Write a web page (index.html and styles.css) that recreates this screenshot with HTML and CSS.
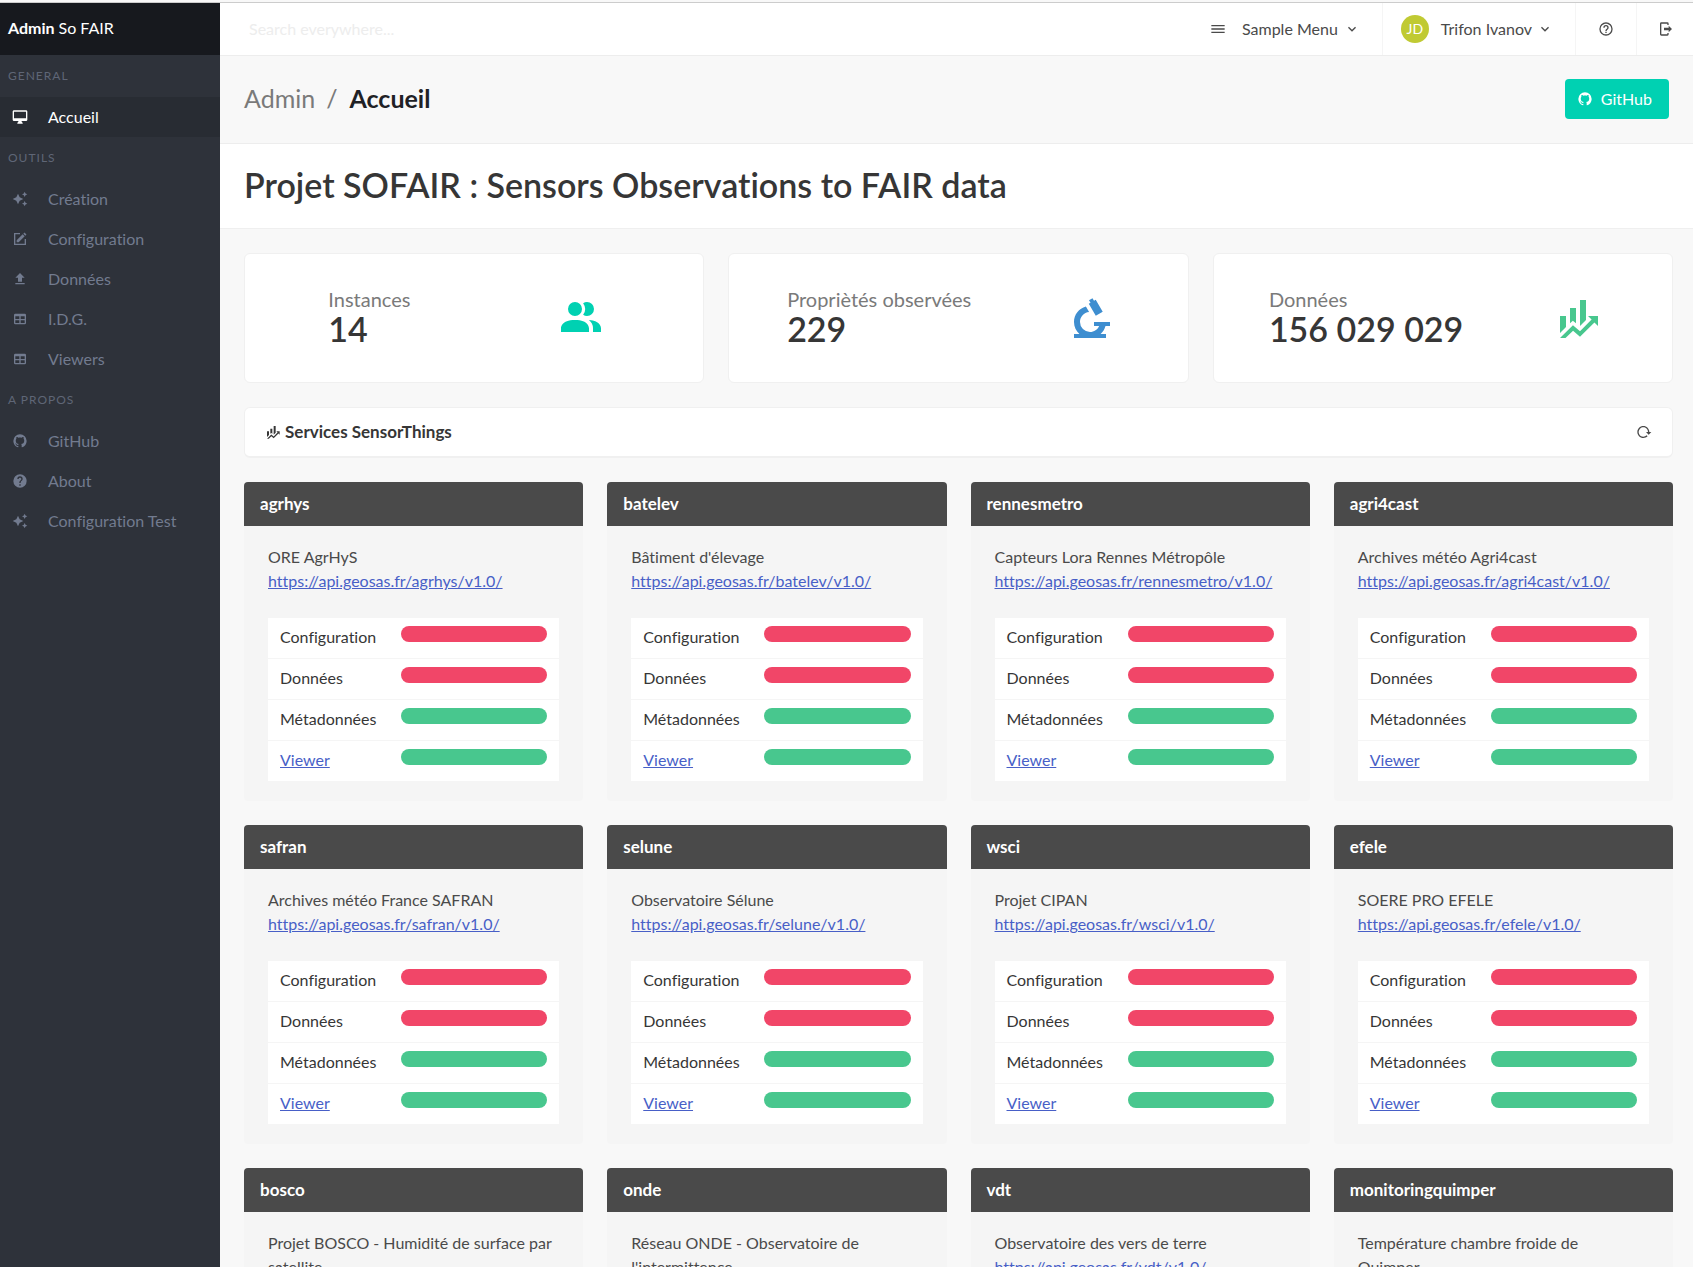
FILE: index.html
```
<!DOCTYPE html>
<html lang="fr">
<head>
<meta charset="utf-8">
<meta name="viewport" content="width=device-width, initial-scale=1">
<title>Admin So FAIR</title>
<link rel="stylesheet" href="styles.css">
</head>
<body>
<svg class="sprite" aria-hidden="true">
  <symbol id="i-desktop" viewBox="0 0 24 24"><path d="M21,14H3V4H21M21,2H3C1.89,2 1,2.89 1,4V16A2,2 0 0,0 3,18H10L8,21V22H16V21L14,18H21A2,2 0 0,0 23,16V4C23,2.89 22.1,2 21,2Z"/></symbol>
  <symbol id="i-creation" viewBox="0 0 24 24"><path d="M19,1L17.74,3.75L15,5L17.74,6.26L19,9L20.25,6.26L23,5L20.25,3.75M9,4L6.5,9.5L1,12L6.5,14.5L9,20L11.5,14.5L17,12L11.5,9.5M19,15L17.74,17.74L15,19L17.74,20.25L19,23L20.25,20.25L23,19L20.25,17.74"/></symbol>
  <symbol id="i-edit" viewBox="0 0 24 24"><path d="M21,12V21H3V3H12V5H5V19H19V12H21M18.7,2.3L21.7,5.3L20,7L17,4L18.7,2.3M7,14L16,5L19,8L10,17H7V14Z"/></symbol>
  <symbol id="i-upload" viewBox="0 0 24 24"><path d="M9,16V10H5L12,3L19,10H15V16H9M5,20V18H19V20H5Z"/></symbol>
  <symbol id="i-table" viewBox="0 0 24 24"><path d="M5,4H19A2,2 0 0,1 21,6V18A2,2 0 0,1 19,20H5A2,2 0 0,1 3,18V6A2,2 0 0,1 5,4M5,8V12H11V8H5M13,8V12H19V8H13M5,14V18H11V14H5M13,14V18H19V14H13Z"/></symbol>
  <symbol id="i-github" viewBox="0 0 24 24"><path d="M12,2A10,10 0 0,0 2,12C2,16.42 4.87,20.17 8.84,21.5C9.34,21.58 9.5,21.27 9.5,21C9.5,20.77 9.5,20.14 9.5,19.31C6.73,19.91 6.14,17.97 6.14,17.97C5.68,16.81 5.03,16.5 5.03,16.5C4.12,15.88 5.1,15.9 5.1,15.9C6.1,15.97 6.63,16.93 6.63,16.93C7.5,18.45 8.97,18 9.54,17.76C9.63,17.11 9.89,16.67 10.17,16.42C7.95,16.17 5.62,15.31 5.62,11.5C5.62,10.39 6,9.5 6.65,8.79C6.55,8.54 6.2,7.5 6.75,6.15C6.75,6.15 7.59,5.88 9.5,7.17C10.29,6.95 11.15,6.84 12,6.84C12.85,6.84 13.71,6.95 14.5,7.17C16.41,5.88 17.25,6.15 17.25,6.15C17.8,7.5 17.45,8.54 17.35,8.79C18,9.5 18.38,10.39 18.38,11.5C18.38,15.32 16.04,16.16 13.81,16.41C14.17,16.72 14.5,17.33 14.5,18.26C14.5,19.6 14.5,20.68 14.5,21C14.5,21.27 14.66,21.59 15.17,21.5C19.14,20.16 22,16.42 22,12A10,10 0 0,0 12,2Z"/></symbol>
  <symbol id="i-help" viewBox="0 0 24 24"><path d="M15.07,11.25L14.17,12.17C13.45,12.89 13,13.5 13,15H11V14.5C11,13.39 11.45,12.39 12.17,11.67L13.41,10.41C13.78,10.05 14,9.55 14,9C14,7.89 13.1,7 12,7A2,2 0 0,0 10,9H8A4,4 0 0,1 12,5A4,4 0 0,1 16,9C16,9.88 15.64,10.67 15.07,11.25M13,19H11V17H13M12,2A10,10 0 0,0 2,12A10,10 0 0,0 12,22A10,10 0 0,0 22,12C22,6.47 17.5,2 12,2Z"/></symbol>
  <symbol id="i-help-outline" viewBox="0 0 24 24"><path d="M11,18H13V16H11V18M12,2A10,10 0 0,0 2,12A10,10 0 0,0 12,22A10,10 0 0,0 22,12A10,10 0 0,0 12,2M12,20C7.59,20 4,16.41 4,12C4,7.59 7.59,4 12,4C16.41,4 20,7.59 20,12C20,16.41 16.41,20 12,20M12,6A4,4 0 0,0 8,10H10A2,2 0 0,1 12,8A2,2 0 0,1 14,10C14,12 11,11.75 11,15H13C13,12.75 16,12.5 16,10A4,4 0 0,0 12,6Z"/></symbol>
  <symbol id="i-menu" viewBox="0 0 24 24"><path d="M2,6H22V8H2V6M2,11H22V13H2V11M2,16H22V18H2V16Z"/></symbol>
  <symbol id="i-chevron" viewBox="0 0 24 24"><path d="M7.41,8.58L12,13.17L16.59,8.58L18,10L12,16L6,10L7.41,8.58Z"/></symbol>
  <symbol id="i-logout" viewBox="0 0 24 24"><path d="M16,17V14H9V10H16V7L21,12L16,17M14,2A2,2 0 0,1 16,4V6H14V4H5V20H14V18H16V20A2,2 0 0,1 14,22H5A2,2 0 0,1 3,20V4A2,2 0 0,1 5,2H14Z"/></symbol>
  <symbol id="i-people" viewBox="0 0 24 24"><path d="M16 17V19H2V17S2 13 9 13 16 17 16 17M12.5 7.5A3.5 3.5 0 1 0 9 11A3.5 3.5 0 0 0 12.5 7.5M15.94 13A5.32 5.32 0 0 1 18 17V19H22V17S22 13.37 15.94 13M15 4A3.39 3.39 0 0 0 13.07 4.59A5 5 0 0 1 13.07 10.41A3.39 3.39 0 0 0 15 11A3.5 3.5 0 0 0 15 4Z"/></symbol>
  <symbol id="i-microscope" viewBox="0 0 24 24"><path d="M9.46,6.28L11.05,9C8.47,9.26 6.5,11.41 6.5,14A5,5 0 0,0 11.5,19C13.55,19 15.31,17.77 16.08,16H13.5V14H21.5V16H19.25C18.84,17.57 17.97,18.96 16.79,20H19.5V22H3.5V20H6.21C4.55,18.53 3.5,16.39 3.5,14C3.5,10.37 5.96,7.2 9.46,6.28M12.74,2.07L13.5,3.37L14.36,2.87L17.86,8.93L14.39,10.93L10.89,4.87L11.76,4.37L11,3.07L12.74,2.07Z"/></symbol>
  <symbol id="i-finance" viewBox="0 0 24 24"><path d="M6,16.5L3,19.44V11H6M11,14.66L9.43,13.32L8,14.64V7H11M16,13L13,16V3H16M18.81,12.81L17,11H22V16L20.21,14.21L13,21.36L9.53,18.34L5.75,22H3L9.47,15.66L13,18.64"/></symbol>
  <symbol id="i-reload" viewBox="0 0 24 24"><path d="M2 12C2 16.97 6.03 21 11 21C13.39 21 15.68 20.06 17.4 18.4L15.9 16.9C14.63 18.25 12.86 19 11 19C4.76 19 1.64 11.46 6.05 7.05C10.46 2.64 18 5.77 18 12H15L19 16H19.1L23 12H20C20 7.03 15.97 3 11 3C6.03 3 2 7.03 2 12Z"/></symbol>
</svg>

<div class="app">
  <aside class="sidebar">
    <div class="brand"><b>Admin</b> So FAIR</div>
    <nav>
      <p class="menu-label">General</p>
      <ul class="menu">
        <li><a href="#" class="active"><svg class="icon"><use href="#i-desktop"/></svg>Accueil</a></li>
      </ul>
      <p class="menu-label">Outils</p>
      <ul class="menu">
        <li><a href="#"><svg class="icon"><use href="#i-creation"/></svg>Création</a></li>
        <li><a href="#"><svg class="icon"><use href="#i-edit"/></svg>Configuration</a></li>
        <li><a href="#"><svg class="icon"><use href="#i-upload"/></svg>Données</a></li>
        <li><a href="#"><svg class="icon"><use href="#i-table"/></svg>I.D.G.</a></li>
        <li><a href="#"><svg class="icon"><use href="#i-table"/></svg>Viewers</a></li>
      </ul>
      <p class="menu-label">A propos</p>
      <ul class="menu">
        <li><a href="#"><svg class="icon"><use href="#i-github"/></svg>GitHub</a></li>
        <li><a href="#"><svg class="icon"><use href="#i-help"/></svg>About</a></li>
        <li><a href="#"><svg class="icon"><use href="#i-creation"/></svg>Configuration Test</a></li>
      </ul>
    </nav>
  </aside>

  <div class="content">
    <header class="navbar">
      <input class="search" type="search" placeholder="Search everywhere..." aria-label="Search everywhere">
      <button class="nav-item nav-menu" type="button"><svg class="icon"><use href="#i-menu"/></svg><span>Sample Menu</span><svg class="icon"><use href="#i-chevron"/></svg></button>
      <button class="nav-item nav-user" type="button"><span class="avatar">JD</span><span>Trifon Ivanov</span><svg class="icon"><use href="#i-chevron"/></svg></button>
      <a class="nav-item nav-icon" href="#" aria-label="Help"><svg class="icon"><use href="#i-help-outline"/></svg></a>
      <a class="nav-item nav-icon" href="#" aria-label="Log out"><svg class="icon"><use href="#i-logout"/></svg></a>
    </header>

    <section class="title-bar">
      <ul class="crumbs">
        <li>Admin</li>
        <li>Accueil</li>
      </ul>
      <a class="button" href="#"><svg class="icon"><use href="#i-github"/></svg>GitHub</a>
    </section>

    <section class="hero">
      <h1>Projet SOFAIR : Sensors Observations to FAIR data</h1>
    </section>

    <main class="main">
      <div class="stats">
        <div class="stat"><div class="stat-text"><h2>Instances</h2><p>14</p></div><svg class="stat-icon teal"><use href="#i-people"/></svg></div>
        <div class="stat"><div class="stat-text"><h2>Propriètés observées</h2><p>229</p></div><svg class="stat-icon blue"><use href="#i-microscope"/></svg></div>
        <div class="stat"><div class="stat-text"><h2>Données</h2><p>156 029 029</p></div><svg class="stat-icon green"><use href="#i-finance"/></svg></div>
      </div>

      <div class="panel">
        <h2><svg class="icon"><use href="#i-finance"/></svg>Services SensorThings</h2>
        <button type="button" aria-label="Reload"><svg class="icon"><use href="#i-reload"/></svg></button>
      </div>

      <div class="services" id="services"></div>
    </main>
  </div>
</div>
<script src="services.js"></script>
</body>
</html>
```
FILE: styles.css
```
* {
  box-sizing: border-box;
}

html {
  padding-top: 2px;
  background: #f8f8f8;
}

body {
  margin: 0;
  border-top: 1px solid #ccc;
  background: #f8f8f8;
  color: #4a4a4a;
  font: 16px/24px Lato, "Open Sans", sans-serif;
  font-variant-ligatures: none;
}

h1, h2, p, ul {
  margin: 0;
  padding: 0;
  font-weight: inherit;
}

ul {
  list-style: none;
}

button, input {
  font: inherit;
  color: inherit;
  background: none;
  border: 0;
  padding: 0;
}

.sprite {
  display: none;
}

.icon {
  flex: none;
  width: 16px;
  height: 16px;
  fill: currentColor;
}

.app {
  display: flex;
  min-height: calc(100vh - 3px);
}

/* Sidebar */
.sidebar {
  flex: none;
  width: 220px;
  background: #2e323a;
}

.brand {
  display: flex;
  align-items: center;
  gap: 4px;
  height: 52px;
  padding: 0 8px 2px;
  background: #17191e;
  color: #fff;
}

.menu-label {
  padding: 12px 8px;
  color: #5f6676;
  font-size: 12px;
  line-height: 18px;
  letter-spacing: 1px;
  text-transform: uppercase;
}

.menu a {
  display: flex;
  align-items: center;
  gap: 20px;
  height: 40px;
  padding-left: 12px;
  color: #727b8f;
  text-decoration: none;
}

.menu a.active {
  background: #282c33;
  color: #fff;
}

/* Top bar */
.content {
  flex: 1;
  min-width: 0;
}

.navbar {
  display: flex;
  height: 53px;
  background: #fff;
  border-bottom: 1px solid #ededed;
}

.search {
  flex: 1;
  min-width: 0;
  padding-left: 29px;
}

.search::placeholder {
  color: #ededed;
}

.nav-item {
  display: flex;
  align-items: center;
  border-left: 1px solid #f5f5f5;
  color: #4a4a4a;
}

.nav-menu {
  gap: 16px;
  padding: 0 22px 0 12px;
  border-left: 0;
}

.nav-menu span {
  margin-right: -10px;
}

.nav-user {
  gap: 12px;
  padding: 0 22px 0 18px;
}

.nav-user .icon {
  margin-left: -7px;
}

.avatar {
  width: 28px;
  height: 28px;
  border-radius: 50%;
  background: #c0ca33;
  color: #fff;
  font-size: 14px;
  line-height: 28px;
  text-align: center;
}

.nav-icon {
  justify-content: center;
  width: 61px;
}

.nav-icon:last-child {
  width: 57px;
  padding-left: 2px;
}

/* Title and hero */
.title-bar {
  display: flex;
  align-items: center;
  justify-content: space-between;
  padding: 23px 24px 24px;
  border-bottom: 1px solid #ededed;
}

.crumbs {
  display: flex;
  padding-bottom: 2px;
  color: #7a7a7a;
  font-size: 25px;
}

.crumbs li + li {
  color: #202125;
  font-weight: 700;
}

.crumbs li + li::before {
  content: "/";
  padding: 0 12px 0 11px;
  color: #7a7a7a;
  font-weight: 400;
}

.button {
  display: flex;
  align-items: center;
  gap: 8px;
  height: 40px;
  padding: 0 17px 0 12px;
  border-radius: 4px;
  background: #00d1b2;
  color: #fff;
  text-decoration: none;
}

.hero {
  padding: 21px 24px 23px;
  background: #fff;
  border-bottom: 1px solid #efefef;
}

.hero h1 {
  color: #363636;
  font-size: 34px;
  font-weight: 600;
  line-height: 40px;
}

/* Main area */
.main {
  padding: 24px 20px 24px 24px;
}

.stats {
  display: grid;
  grid-template-columns: repeat(3, 1fr);
  gap: 24px;
}

.stat {
  display: flex;
  align-items: center;
  justify-content: space-around;
  height: 130px;
  padding: 0 23px 0 24px;
  background: #fff;
  border: 1px solid #f0f0f0;
  border-radius: 6px;
}

.stat-text {
  margin-right: 12px;
  padding-bottom: 4px;
}

.stat h2 {
  color: #7a7a7a;
  font-size: 20px;
  line-height: 26px;
}

.stat p {
  color: #363636;
  font-size: 34px;
  font-weight: 600;
  line-height: 34px;
}

.stat-icon {
  width: 80px;
  height: 48px;
}

.teal {
  fill: #00d1b2;
}

.blue {
  fill: #3e8ed0;
}

.green {
  fill: #48c78e;
}

.panel {
  display: flex;
  align-items: center;
  justify-content: space-between;
  height: 51px;
  margin: 24px 0;
  padding: 0 20px;
  background: #fff;
  border: 1px solid #f0f0f0;
  border-bottom-width: 2px;
  border-radius: 6px;
}

.panel h2 {
  display: flex;
  align-items: center;
  gap: 4px;
  color: #363636;
  font-size: 17px;
  font-weight: 700;
}

.panel button {
  display: flex;
}

/* Service cards */
.services {
  display: grid;
  grid-template-columns: repeat(4, 1fr);
  gap: 24px;
}

.service {
  background: #f5f5f5;
  border-radius: 4px;
  overflow: hidden;
}

.service h3 {
  margin: 0;
  padding: 10px 16px;
  background: #4a4a4a;
  color: #fff;
  font-size: 17px;
  font-weight: 700;
}

.service-body {
  padding: 19px 24px 20px;
}

.service a {
  color: #485fc7;
  text-decoration: underline;
}

.service table {
  width: 100%;
  margin-top: 25px;
  border-collapse: collapse;
  background: #fff;
  color: #363636;
}

.service th,
.service td {
  padding: 8px 12px;
  font-weight: 400;
  text-align: left;
  vertical-align: top;
}

.service th {
  width: 121px;
  padding: 7px 12px 9px;
}

.service tr + tr {
  border-top: 1px solid #f5f5f5;
}

.bar {
  height: 16px;
  border-radius: 8px;
}

.bar.off {
  background: #f14668;
}

.bar.on {
  background: #48c78e;
}
```
FILE: services.js
```
const services = [
  ["agrhys", "ORE AgrHyS"],
  ["batelev", "Bâtiment d'élevage"],
  ["rennesmetro", "Capteurs Lora Rennes Métropôle"],
  ["agri4cast", "Archives météo Agri4cast"],
  ["safran", "Archives météo France SAFRAN"],
  ["selune", "Observatoire Sélune"],
  ["wsci", "Projet CIPAN"],
  ["efele", "SOERE PRO EFELE"],
  ["bosco", "Projet BOSCO - Humidité de surface par satellite"],
  ["onde", "Réseau ONDE - Observatoire de l'intermittence"],
  ["vdt", "Observatoire des vers de terre"],
  ["monitoringquimper", "Température chambre froide de<br>Quimper"]
];

const rows = [
  ["Configuration", "off"],
  ["Données", "off"],
  ["Métadonnées", "on"],
  ['<a href="#">Viewer</a>', "on"]
];

document.getElementById("services").innerHTML = services.map(([name, label]) => {
  const url = `https://api.geosas.fr/${name}/v1.0/`;
  return `<article class="service">
    <h3>${name}</h3>
    <div class="service-body">
      <p>${label}</p>
      <a href="${url}">${url}</a>
      <table>${rows.map(([text, state]) => `<tr><th scope="row">${text}</th><td><div class="bar ${state}"></div></td></tr>`).join("")}</table>
    </div>
  </article>`;
}).join("");
```
